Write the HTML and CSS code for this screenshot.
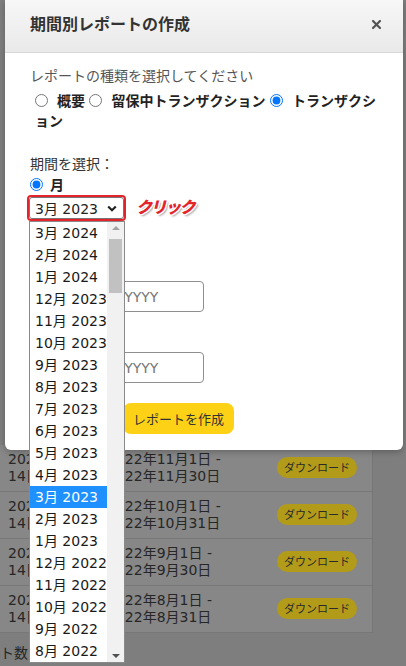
FILE: index.html
```html
<!DOCTYPE html>
<html lang="ja">
<head>
<meta charset="utf-8">
<title>期間別レポートの作成</title>
<link rel="stylesheet" href="styles.css">
</head>
<body>
<div class="page">
  <div class="table">
    <div class="row"><div class="c1">2023年3月<br>14日</div><div class="c2">2022年11月1日 -<br>2022年11月30日</div><span class="dl">ダウンロード</span></div>
    <div class="row"><div class="c1">2023年3月<br>14日</div><div class="c2">2022年10月1日 -<br>2022年10月31日</div><span class="dl">ダウンロード</span></div>
    <div class="row"><div class="c1">2023年3月<br>14日</div><div class="c2">2022年9月1日 -<br>2022年9月30日</div><span class="dl">ダウンロード</span></div>
    <div class="row"><div class="c1">2023年3月<br>14日</div><div class="c2">2022年8月1日 -<br>2022年8月31日</div><span class="dl">ダウンロード</span></div>
  </div>
  <div class="footer"><span>ト数</span><span class="prev">‹</span></div>
</div>

<div class="modal">
  <div class="modal-header">
    <h2 class="title">期間別レポートの作成</h2>
    <svg class="close" width="9" height="9" viewBox="0 0 9 9"><path d="M1 1L8 8M8 1L1 8" stroke="#555" stroke-width="2.2" stroke-linecap="square"/></svg>
  </div>
  <div class="modal-body">
    <p class="hint">レポートの種類を選択してください</p>
    <div class="types"><label class="opt-label"><input class="radio" type="radio" name="t"><b>概要</b></label> <label class="opt-label"><input class="radio" type="radio" name="t"><b>留保中トランザクション</b></label> <label class="opt-label"><input class="radio" type="radio" name="t" checked><b>トランザクション</b></label></div>
    <p class="label period">期間を選択：</p>
    <div class="month"><input class="radio" type="radio" name="p" checked><b>月</b></div>
    <div class="select-wrap">
      <div class="select"><span>3月 2023</span><svg width="10" height="7" viewBox="0 0 10 7"><path d="M1.2 1.5L5 5.2L8.8 1.5" fill="none" stroke="#222" stroke-width="2.2"/></svg></div>
      <span class="ring"></span>
      <span class="click">クリック</span>
      <div class="dropdown">
        <div class="options">
          <div class="opt">3月 2024</div>
          <div class="opt">2月 2024</div>
          <div class="opt">1月 2024</div>
          <div class="opt">12月 2023</div>
          <div class="opt">11月 2023</div>
          <div class="opt">10月 2023</div>
          <div class="opt">9月 2023</div>
          <div class="opt">8月 2023</div>
          <div class="opt">7月 2023</div>
          <div class="opt">6月 2023</div>
          <div class="opt">5月 2023</div>
          <div class="opt">4月 2023</div>
          <div class="opt sel">3月 2023</div>
          <div class="opt">2月 2023</div>
          <div class="opt">1月 2023</div>
          <div class="opt">12月 2022</div>
          <div class="opt">11月 2022</div>
          <div class="opt">10月 2022</div>
          <div class="opt">9月 2022</div>
          <div class="opt">8月 2022</div>
        </div>
        <div class="scrollbar">
          <span class="sb-btn"><i class="up"></i></span>
          <span class="thumb"></span>
          <span class="sb-fill"></span>
          <span class="sb-btn"><i class="down"></i></span>
        </div>
      </div>
    </div>
    <p class="label first">開始</p>
    <input class="date" placeholder="MM/DD/YYYY">
    <p class="label second">終了</p>
    <input class="date" placeholder="MM/DD/YYYY">
    <div class="actions"><button class="btn cancel">キャンセル</button><button class="btn create">レポートを作成</button></div>
  </div>
</div>
</body>
</html>
```
FILE: styles.css
```css
html, body {
  margin: 0;
  padding: 0;
}
body {
  width: 406px;
  height: 666px;
  overflow: hidden;
  position: relative;
  background: #7e7e7e;
  font-family: "DejaVu Sans", "Noto Sans CJK JP", sans-serif;
  font-size: 14px;
  color: #222;
}
.page {
  padding-top: 445px;
}
.table {
  width: 372px;
  border-right: 1px solid #767676;
  background: #878787;
}
.row {
  display: flex;
  align-items: center;
  height: 47px;
  box-sizing: border-box;
  border-bottom: 1px solid #777;
  line-height: 17px;
  color: #262626;
}
.c1 {
  width: 99px;
  padding-left: 8px;
  white-space: nowrap;
  overflow: hidden;
}
.c2 {
  width: 170px;
  white-space: nowrap;
}
.dl {
  width: 80px;
  height: 21px;
  line-height: 21px;
  border-radius: 11px;
  background: #b39b1a;
  color: #2a2a2a;
  text-align: center;
  font-family: "Noto Sans CJK JP", sans-serif;
  font-size: 11px;
  margin-top: -2px;
}
.footer {
  margin-top: 9px;
  line-height: 20px;
  display: flex;
  gap: 7px;
  color: #262626;
  font-family: "Noto Sans CJK JP", sans-serif;
}
.prev {
  color: #444;
  font-size: 12px;
}

.modal {
  position: absolute;
  left: 5px;
  top: 0;
  width: 398px;
  background: #fff;
  border-radius: 0 0 6px 6px;
  box-shadow: 0 2px 6px rgba(0,0,0,0.25);
}
.modal-header {
  height: 53px;
  box-sizing: border-box;
  border-bottom: 1px solid #d8d8d8;
  background: linear-gradient(#f7f7f7, #e9e9e9);
  display: flex;
  align-items: center;
  justify-content: space-between;
  padding: 0 22px 6px 25px;
}
.title {
  margin: 0;
  font-family: "Noto Sans CJK JP", sans-serif;
  font-size: 16px;
  font-weight: 700;
  color: #333;
  line-height: 24px;
}
.close {
  display: block;
  margin-top: 2px;
}
.modal-body {
  padding: 13px 25px 16px 25px;
  font-family: "DejaVu Sans", "Noto Sans CJK JP", sans-serif;
}
.hint {
  margin: 0;
  line-height: 20px;
  color: #555;
}
.types {
  margin-top: 5px;
  line-height: 20px;
  padding-left: 5px;
  color: #222;
}
.types b, .month b {
  font-weight: 700;
}
.radio {
  width: 13px;
  height: 13px;
  margin: 0 9px 0 0;
  vertical-align: -1px;
}
.label {
  margin: 0;
  line-height: 20px;
  color: #333;
}
.period {
  margin-top: 23px;
}
.month {
  margin-top: 1px;
  line-height: 20px;
}
.month .radio {
  margin-right: 7px;
}
.select-wrap {
  position: relative;
  margin-top: 2px;
  margin-left: -1px;
  width: 95px;
}
.select {
  height: 22px;
  box-sizing: border-box;
  border: 1px solid #767676;
  border-radius: 3px;
  background: #fff;
  display: flex;
  align-items: center;
  justify-content: space-between;
  padding: 0 6px 0 5px;
  color: #222;
}
.ring {
  position: absolute;
  left: -2px;
  top: -2px;
  width: 99px;
  height: 26px;
  box-sizing: border-box;
  border: 2px solid #e3242b;
  border-radius: 4px;
}
.click {
  position: absolute;
  left: 107px;
  top: -2px;
  white-space: nowrap;
  font-family: "Noto Sans CJK JP", sans-serif;
  font-size: 16px;
  letter-spacing: -1.5px;
  font-weight: 900;
  font-style: italic;
  line-height: 22px;
  color: #e3242b;
  text-shadow: 1px 0 0 #fff, -1px 0 0 #fff, 0 1px 0 #fff, 0 -1px 0 #fff, 1px 1px 0 #fff, -1px -1px 0 #fff, 1px -1px 0 #fff, -1px 1px 0 #fff, 2px 2px 2px rgba(0,0,0,0.35);
}
.dropdown {
  position: absolute;
  left: 0;
  top: 24px;
  width: 96px;
  box-sizing: border-box;
  border: 1px solid #8a8a8a;
  background: #fff;
  display: flex;
  z-index: 2;
}
.options {
  flex: 1;
}
.opt {
  height: 22px;
  line-height: 22px;
  padding-left: 5px;
  white-space: nowrap;
  color: #1a1a1a;
}
.opt.sel {
  background: #1e90ff;
  color: #fff;
}
.scrollbar {
  width: 17px;
  background: #f1f1f1;
  display: flex;
  flex-direction: column;
  align-items: center;
}
.sb-btn {
  height: 17px;
  width: 17px;
  display: flex;
  align-items: center;
  justify-content: center;
}
.sb-btn i {
  width: 0;
  height: 0;
  border-left: 4px solid transparent;
  border-right: 4px solid transparent;
}
.sb-btn .up {
  border-bottom: 4px solid #a3a3a3;
  margin-top: -6px;
}
.sb-btn .down {
  border-top: 4px solid #505050;
  margin-top: 4px;
}
.thumb {
  width: 13px;
  height: 54px;
  background: #c1c1c1;
}
.sb-fill {
  flex: 1;
}
.first {
  margin-top: 34px;
}
.second {
  margin-top: 12px;
}
.date {
  display: block;
  margin-top: 8px;
  width: 174px;
  height: 31px;
  box-sizing: border-box;
  border: 1px solid #8f8f8f;
  border-radius: 4px;
  padding: 0 0 0 38px;
  font-family: "DejaVu Sans", sans-serif;
  font-size: 14px;
}
.date::placeholder {
  color: #777;
}
.actions {
  margin-top: 20px;
  display: flex;
  gap: 8px;
}
.btn {
  height: 31px;
  border: none;
  border-radius: 8px;
  font-family: "Noto Sans CJK JP", sans-serif;
  font-size: 13px;
  color: #333;
  padding: 0 10px;
}
.cancel {
  width: 85px;
  background: #e6e6e6;
}
.create {
  background: #fcd116;
}
```
